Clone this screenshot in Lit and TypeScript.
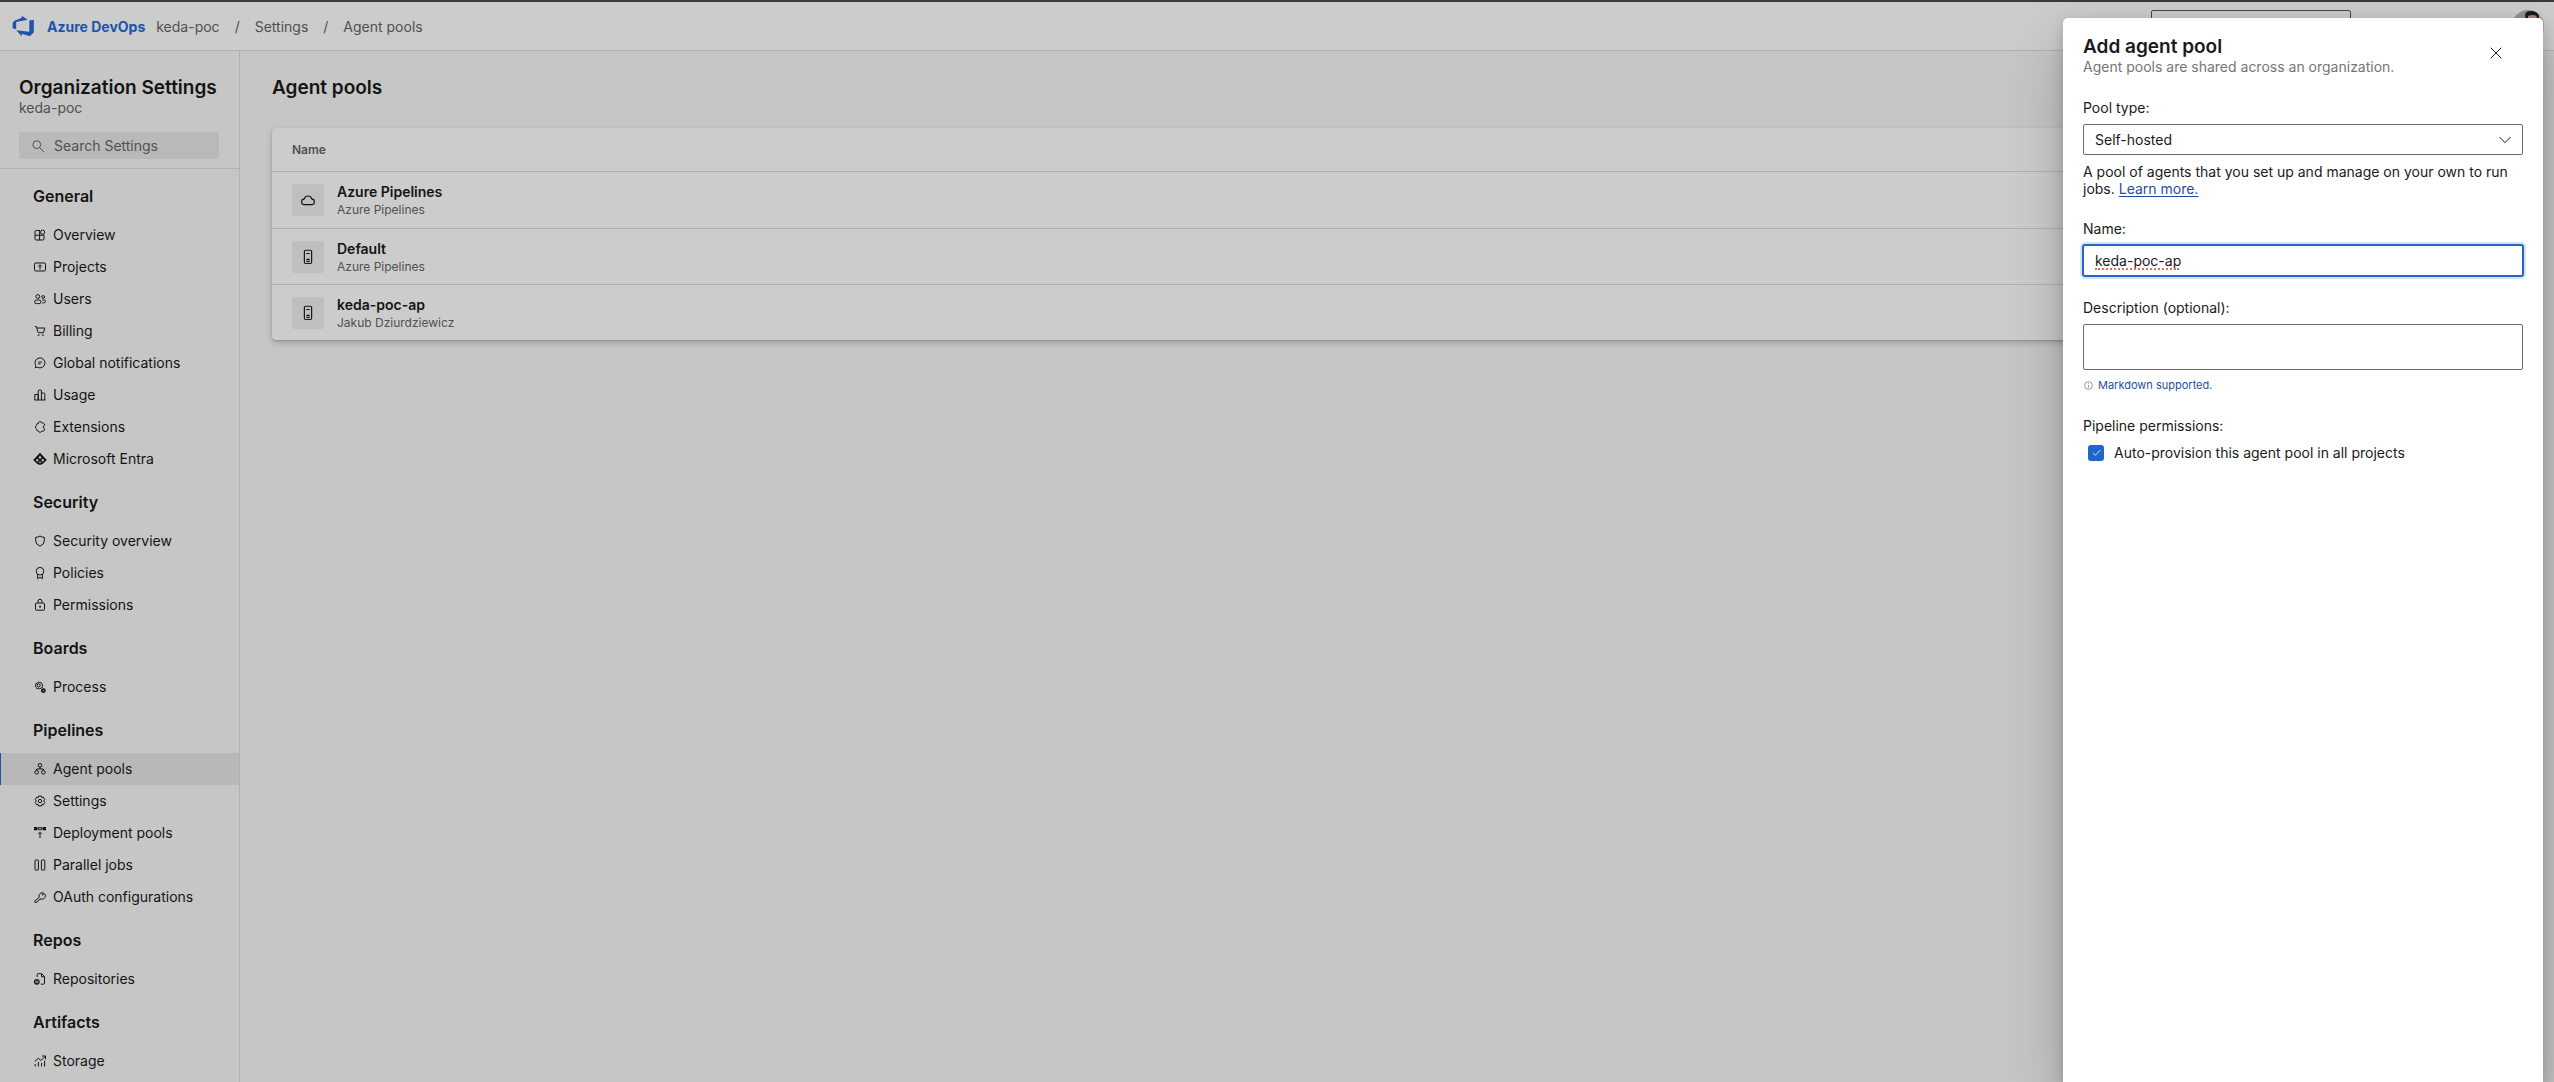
import { LitElement, html, css, svg, nothing, type SVGTemplateResult } from "lit";
import { customElement, property } from "lit/decorators.js";
import { classMap } from "lit/directives/class-map.js";

const icons: Record<string, SVGTemplateResult> = {
  overview: svg`<path d="M6 1.500H2.200Q1 1.500 1 2.700v7.100Q1 11 2.200 11h6.600Q10 11 10 9.800V6.200H1M5.600 1.500V11"/><circle cx="8.600" cy="3.200" r="2.100"/>`,
  projects: svg`<rect x=".5" y="2" width="11" height="8" rx="1.200"/><path d="M6 8.500V4.200M4.300 5.300 6 3.800l1.700 1.500"/>`,
  users: svg`<circle cx="3.800" cy="3.500" r="1.900"/><circle cx="9.200" cy="4" r="1.400"/><rect x=".6" y="7" width="6.400" height="3.600" rx="1.800"/><path d="M8.200 7h2.100q1.200 0 1.200 1.200 0 1.900-3.100 1.900"/>`,
  billing: svg`<path d="M.8 1.500h1.500l1.900 6.200h5.300l1.300-4.700H2.800"/><path d="M4.600 9.500v1.300M8.800 9.500v1.300" stroke-width="1.700"/>`,
  notify: svg`<path d="M1.300 10.700 1.700 8.500A5 5 0 1 1 3.600 10.300Z"/><path d="M4.200 5.100h3.800M4.200 6.900h2.300"/>`,
  usage: svg`<path d="M.8 11V5.500h3.400V11M4.200 11V2q0-1 1-1h1.200q1 0 1 1v9M7.400 4h2.200q1.200 0 1.200 1.200V11M.5 11h10.800"/>`,
  extensions: svg`<path d="M4.500 2.300A1.500 1.500 0 0 1 7.500 1.800L9.500 2.200Q10.800 2.600 10.600 4.300A1.900 1.900 0 0 0 10.600 7.900Q10.800 9.700 9.500 10L7.500 10.400A1.600 1.600 0 0 1 4.500 10.200Q2.600 10.200 2.700 8.100A2.200 2.200 0 0 1 2.700 4.200Q2.600 2.200 4.500 2.300Z"/>`,
  entra: svg`<path fill="currentColor" fill-rule="evenodd" stroke="none" d="M6-.200 12.800 7 8.600 11 6 12 3.400 11-.800 7ZM6 2.600 4.400 5 6 5.800 7.600 5ZM3.300 5.700 1.700 7.100 3.500 8.700 4.700 7.200ZM8.700 5.700 7.300 7.200 8.500 8.700 10.300 7.100ZM6 8.200 4.800 9.500 6 10.200 7.200 9.500Z"/>`,
  shield: svg`<path d="M6 1Q7.700 2.300 10.300 2.300V6Q10.300 9.500 6 11.200 1.700 9.500 1.700 6V2.300Q4.300 2.300 6 1Z"/>`,
  policies: svg`<circle cx="6" cy="4.200" r="3.800"/><path d="M3.600 7.300V11.600L6 10.400l2.400 1.200V7.300"/>`,
  lock: svg`<rect x="1.500" y="4" width="9" height="7.200" rx="1"/><path d="M4 4V2.300a2 2 0 0 1 4 0V4"/><path d="M5.200 7.600h1.700" stroke-width="1.700"/>`,
  process: svg`<path d="M4.500.8l1.200.9 1.500-.1.400 1.400 1.200.9-.6 1.400.1 1.500-1.500.3-1 1-1.300-.700-1.600.3-.500-1.400L1.200 5.300l.6-1.300L1.900 2.500l1.500-.2Z"/><circle cx="4.700" cy="4.400" r="1.500"/><circle cx="9.400" cy="9.600" r="1.500" stroke-width="1.800"/>`,
  agents: svg`<circle cx="6" cy="2.300" r="1.800"/><circle cx="2.600" cy="9.300" r="1.800"/><circle cx="9.400" cy="9.300" r="1.800"/><path d="M6 4.100V6M2.600 7.500V6h6.800v1.500"/>`,
  gear: svg`<path d="M4.700 1h2.600l.5 1.500 1.600-.3 1.300 2.300L9.700 6l1 1.500-1.300 2.300-1.600-.3L7.300 11H4.700l-.5-1.500-1.600.3L1.300 7.500 2.300 6l-1-1.500 1.300-2.300 1.600.3Z"/><circle cx="6" cy="6" r="1.700"/>`,
  deploy: svg`<path fill="currentColor" stroke="none" d="M0 0h3.400v3.300H0ZM8.600 0H12v3.300H8.600Z"/><path d="M4.600.6h2.800v2.200H4.600ZM3.500 1.700h1M7.500 1.700h1M6 11V5.500M4.300 7 6 5.300 7.700 7"/>`,
  parallel: svg`<rect x="1" y="1" width="3.400" height="10" rx=".6"/><rect x="7.400" y="1" width="3.400" height="10" rx=".6"/>`,
  key: svg`<path d="M5.300 6.400A3.200 3.200 0 1 1 7.100 8L6 8.100 5.500 9 4.400 9.300 3.900 10.500 2.800 11.300H.9V9.800Z"/><circle cx="8.700" cy="3.600" r=".5"/>`,
  repo: svg`<path d="M3.200 4V1.700Q3.200.7 4.200.7h3.500L10.500 3.500V10q0 1.200-1.200 1.200H6.800M7.500.9v2.800h2.800"/><circle cx="2.800" cy="8.800" r="2.900" fill="currentColor" stroke="none"/><path stroke="#f8f8f8" stroke-width=".7" d="M1.900 7.300v3M3.800 7.300v3M1.900 9h1.900"/>`,
  storage: svg`<path d="M1.200 11.500V9M4.400 11.500V7M7.600 11.500V8M10.600 11.500V5.800M.8 6.500 4.300 3.200l2.500 2.300 4.300-4M8 1h3.500v3.300"/>`,
  search: svg`<circle cx="4.800" cy="4.700" r="3.900"/><path d="M7.600 7.600 11.800 11.800"/>`,
  cloud: svg`<path d="M3.200 10a2.500 2.500 0 0 1-.3-5A3.200 3.200 0 0 1 9.100 5a2.500 2.500 0 0 1-.3 5Z"/>`,
  server: svg`<rect x="2.900" y=".2" width="6.200" height="11.400" rx="1"/><path d="M4.600 3h2.900M4.600 8h2.900M4.600 9.700h2.900"/>`,
  close: svg`<path d="M.7.700 11.300 11.300M11.300.7.700 11.300"/>`,
  chevron: svg`<path d="M.5 3 6 8.700 11.500 3"/>`,
  info: svg`<circle cx="6" cy="6" r="5.200"/><path d="M6 5.300V9M6 2.800v1.200"/>`,
  check: svg`<path d="M1.200 6.500 4.500 9.700 11 2.700"/>`,
};

@customElement("ui-icon")
export class UiIcon extends LitElement {
  @property() name = "";
  static styles = css`
    :host { display: inline-flex; flex: none; width: 12px; height: 12px; }
    svg { width: 100%; height: 100%; overflow: visible; fill: none; stroke: currentColor; stroke-width: 1; stroke-linejoin: round; }
  `;
  render() {
    return html`<svg viewBox="0 0 12 12" aria-hidden="true">${icons[this.name] ?? nothing}</svg>`;
  }
}

const sections = [
  { title: "General", items: [["overview", "Overview"], ["projects", "Projects"], ["users", "Users"], ["billing", "Billing"], ["notify", "Global notifications"], ["usage", "Usage"], ["extensions", "Extensions"], ["entra", "Microsoft Entra"]] },
  { title: "Security", items: [["shield", "Security overview"], ["policies", "Policies"], ["lock", "Permissions"]] },
  { title: "Boards", items: [["process", "Process"]] },
  { title: "Pipelines", items: [["agents", "Agent pools"], ["gear", "Settings"], ["deploy", "Deployment pools"], ["parallel", "Parallel jobs"], ["key", "OAuth configurations"]] },
  { title: "Repos", items: [["repo", "Repositories"]] },
  { title: "Artifacts", items: [["storage", "Storage"]] },
];

const pools = [
  { icon: "cloud", name: "Azure Pipelines", owner: "Azure Pipelines" },
  { icon: "server", name: "Default", owner: "Azure Pipelines" },
  { icon: "server", name: "keda-poc-ap", owner: "Jakub Dziurdziewicz" },
];

@customElement("settings-nav")
export class SettingsNav extends LitElement {
  static styles = css`
    :host { display: block; box-sizing: border-box; border-right: 1px solid #dedede; }
    .head { padding: 25px 20px 9px 19px; border-bottom: 1px solid #dedede; }
    .title { margin: 0; font-size: 19px; line-height: 24px; font-weight: 600; white-space: nowrap; }
    .org { margin: 0 0 17px; font-size: 14px; line-height: 15px; color: #666; }
    .search { display: flex; align-items: center; gap: 10px; height: 27px; padding: 0 13px; border-radius: 2px; background: #e8e8e8; color: #666; }
    .search input { flex: 1; min-width: 0; border: 0; padding: 0; background: none; font: inherit; font-size: 14px; color: inherit; outline: none; }
    .search input::placeholder { color: #666; opacity: 1; }
    .group { margin: 0; padding: 15px 33px 11px; font-size: 16px; line-height: 24px; font-weight: 600; }
    ul { margin: 0; padding: 0; list-style: none; }
    a { display: flex; align-items: center; gap: 7px; box-sizing: border-box; height: 32px; padding: 0 0 1px 34px; color: inherit; font-size: 14px; line-height: 17px; text-decoration: none; white-space: nowrap; }
    a.active { background: #e6e6e6; box-shadow: inset 1px 0 #266bd6; }
  `;
  render() {
    return html`
      <div class="head">
        <h2 class="title">Organization Settings</h2>
        <p class="org">keda-poc</p>
        <label class="search"><ui-icon name="search"></ui-icon><input type="text" placeholder="Search Settings" aria-label="Search Settings" /></label>
      </div>
      <nav>
        ${sections.map((s) => html`
          <h3 class="group">${s.title}</h3>
          <ul>${s.items.map(([icon, label]) => html`
            <li><a href="#" class=${classMap({ active: label === "Agent pools" })}><ui-icon name=${icon}></ui-icon><span>${label}</span></a></li>`)}
          </ul>`)}
      </nav>`;
  }
}

@customElement("pool-table")
export class PoolTable extends LitElement {
  static styles = css`
    :host { display: block; border-radius: 4px; background: #fff; box-shadow: 0 3px 7px rgba(0, 0, 0, 0.18), 0 1px 2px rgba(0, 0, 0, 0.16); }
    table { width: 100%; border-spacing: 0; }
    th { height: 43px; padding: 0 20px; text-align: left; font-size: 12px; font-weight: 600; color: #666; }
    td { height: 55px; padding: 0 20px; border-top: 1px solid #dedede; }
    tr:first-child td { height: 56px; }
    .pool { display: flex; align-items: center; gap: 13px; }
    .tile { display: grid; place-items: center; width: 32px; height: 32px; border-radius: 2px; background: #efefef; }
    .tile ui-icon { width: 14px; height: 14px; }
    .name { font-size: 14px; line-height: 19px; font-weight: 600; }
    .owner { font-size: 12px; line-height: 17px; color: #666; }
  `;
  render() {
    return html`<table>
      <thead><tr><th scope="col">Name</th></tr></thead>
      <tbody>${pools.map((p) => html`<tr><td><div class="pool">
        <span class="tile"><ui-icon name=${p.icon}></ui-icon></span>
        <div><div class="name">${p.name}</div><div class="owner">${p.owner}</div></div>
      </div></td></tr>`)}</tbody>
    </table>`;
  }
}

@customElement("add-pool-panel")
export class AddPoolPanel extends LitElement {
  static styles = css`
    :host { display: block; box-sizing: border-box; padding: 17px 20px; border-radius: 5px 5px 0 0; background: #fff; font-size: 14px; line-height: 17px;
      box-shadow: 0 26px 58px rgba(0, 0, 0, 0.22), 0 5px 14px rgba(0, 0, 0, 0.18); }
    .head { display: flex; justify-content: space-between; margin-bottom: 25px; }
    .title { margin: 0; font-size: 19px; line-height: 24px; font-weight: 600; }
    .sub { margin: 0; line-height: 15px; color: #757575; }
    .close { display: grid; place-items: center; width: 32px; height: 32px; margin: 2px 11px 0 0; padding: 0; border: 0; background: none; color: inherit; }
    .field { display: flex; flex-direction: column; margin-bottom: 23px; }
    .label { margin-bottom: 8px; }
    select, input[type="text"], textarea { box-sizing: border-box; width: 100%; margin: 0; padding: 0 11px; border: 1px solid #6b6b6b; border-radius: 2px; background: #fff; font: inherit; color: inherit; outline: none; }
    .stack { display: grid; align-items: center; }
    .stack > * { grid-area: 1 / 1; }
    .stack ui-icon { justify-self: end; margin-right: 12px; pointer-events: none; }
    select { appearance: none; height: 31px; }
    .help { margin: 8px 0 0; }
    .help a { color: #1f4f9c; text-underline-offset: 2px; }
    input[type="text"] { height: 31px; padding-bottom: 1px; border-color: #2266cc; box-shadow: 0 0 0 1px #2266cc, 0 0 0 3px #d6e3f7; }
    .misspelt { align-self: end; width: 84px; margin: 0 0 6px 12px; border-bottom: 2px dotted #ef6a5e; pointer-events: none; }
    textarea { display: block; height: 46px; padding: 8px 11px; resize: none; }
    .md { display: flex; align-items: center; gap: 5px; margin-top: 7px; padding-left: 1px; font-size: 11px; color: #777; }
    .md ui-icon { width: 9px; height: 9px; }
    .md a { color: #1f4f9c; text-decoration: none; }
    fieldset { margin: 0; padding: 0; border: 0; }
    legend { padding: 0; }
    .option { display: flex; align-items: center; gap: 10px; margin-top: 10px; padding-left: 5px; }
    .tick { display: grid; place-items: center; color: #fff; }
    .tick > * { grid-area: 1 / 1; }
    .tick input { appearance: none; width: 16px; height: 16px; margin: 0; border-radius: 3px; background: #2266cc; }
    .tick ui-icon { width: 9px; height: 9px; pointer-events: none; }
  `;
  render() {
    return html`
      <div class="head">
        <div><h2 class="title">Add agent pool</h2><p class="sub">Agent pools are shared across an organization.</p></div>
        <button class="close" type="button" aria-label="Close"><ui-icon name="close"></ui-icon></button>
      </div>
      <div class="field">
        <label class="label" for="type">Pool type:</label>
        <div class="stack"><select id="type"><option>Self-hosted</option></select><ui-icon name="chevron"></ui-icon></div>
        <p class="help">A pool of agents that you set up and manage on your own to run jobs. <a href="#">Learn more.</a></p>
      </div>
      <div class="field">
        <label class="label" for="name">Name:</label>
        <div class="stack"><input id="name" type="text" spellcheck="false" .value=${"keda-poc-ap"} /><span class="misspelt"></span></div>
      </div>
      <div class="field">
        <label class="label" for="desc">Description (optional):</label>
        <textarea id="desc"></textarea>
        <div class="md"><ui-icon name="info"></ui-icon><a href="#">Markdown supported.</a></div>
      </div>
      <fieldset>
        <legend>Pipeline permissions:</legend>
        <label class="option"><span class="tick"><input type="checkbox" checked /><ui-icon name="check"></ui-icon></span>Auto-provision this agent pool in all projects</label>
      </fieldset>`;
  }
}

@customElement("app-root")
export class AppRoot extends LitElement {
  static styles = css`
    :host { display: block; position: relative; overflow: hidden; min-height: 100vh; background: #f8f8f8; color: #1a1a1a; font-family: Inter, "Liberation Sans", sans-serif; }
    .page { display: grid; grid-template: auto 1fr / 240px minmax(0, 1fr); min-height: 100vh; }
    header { grid-column: 1 / -1; display: flex; align-items: center; box-sizing: border-box; height: 51px; padding: 2px 10px 0 12px; border-bottom: 1px solid #dedede; background: #fff; font-size: 14px; }
    .logo { width: 22px; height: 22px; fill: #266bd6; }
    .brand { margin-left: 13px; color: #266bd6; font-weight: 700; text-decoration: none; }
    .crumbs { display: flex; gap: 15px; margin: 0 auto 0 11px; padding: 0; list-style: none; color: #666; }
    .crumbs a { color: inherit; text-decoration: none; }
    .find { box-sizing: border-box; width: 200px; height: 32px; margin-right: 161px; border: 1px solid #555; border-radius: 2px; background: #fff; }
    .avatar { width: 32px; height: 32px; border-radius: 50%; }
    main { padding: 25px 32px; }
    h1 { margin: 0 0 28px; font-size: 19px; line-height: 24px; font-weight: 600; }
    .scrim { position: absolute; inset: 0; border-top: 2px solid #3a3838; background: rgba(0, 0, 0, 0.2); background-clip: padding-box; }
    add-pool-panel { position: absolute; top: 18px; right: 11px; bottom: 0; width: 480px; }
  `;
  render() {
    return html`
      <div class="page">
        <header>
          <svg class="logo" viewBox="0 0 22 22" aria-hidden="true"><path d="M.6 8 2.400 5.700 9.800 2.700V.8L15.800 4.700 4.200 7V14.200L.6 13.200Z"/><path d="M21.800 4.800V17.200L17.800 21.300 9.800 18.700V21.500L4.300 15.200 17.300 16.800V5.600Z"/></svg>
          <a class="brand" href="#">Azure DevOps</a>
          <ul class="crumbs"><li><a href="#">keda-poc</a></li><li>/</li><li><a href="#">Settings</a></li><li>/</li><li><a href="#">Agent pools</a></li></ul>
          <input class="find" type="search" aria-label="Search" />
          <svg class="avatar" viewBox="0 0 32 32" aria-hidden="true"><rect width="32" height="32" fill="#b4b6bc"/><path d="M24 0h8v32h-8Z" fill="#d3d4d8"/><path d="M13 5q0-4 7-4 6 0 7 5v6H14Z" fill="#262222"/><path d="M16 6q5-2 8.500 0L26 14H16Z" fill="#d9a893"/></svg>
        </header>
        <settings-nav></settings-nav>
        <main><h1>Agent pools</h1><pool-table></pool-table></main>
      </div>
      <div class="scrim"></div>
      <add-pool-panel role="dialog" aria-label="Add agent pool"></add-pool-panel>`;
  }
}
